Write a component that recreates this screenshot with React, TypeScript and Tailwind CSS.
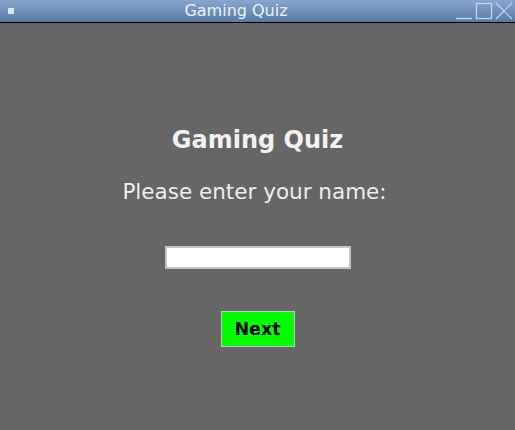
import React, { useState } from "react";

function TitleBar() {
  return (
    <div className="relative h-[23px] w-full bg-gradient-to-b from-[#8aa4cc] to-[#587aa8] border-b border-black flex items-center justify-center pr-[43px]">
      <span className="absolute left-[8px] top-[8px] w-[6px] h-[6px] bg-[#dde6f4]" />
      <span className="text-[16px] text-[#eef2f8] leading-none">Gaming Quiz</span>
      <div className="absolute right-[2px] top-[2px] flex items-end gap-[2px]">
        <svg width="18" height="18" viewBox="0 0 18 18">
          <path d="M1 16.5 H17" stroke="#c8d4e8" strokeWidth="1.5" />
        </svg>
        <svg width="18" height="18" viewBox="0 0 18 18">
          <rect x="1.5" y="1.5" width="15" height="15" fill="none" stroke="#c8d4e8" strokeWidth="1.3" />
        </svg>
        <svg width="18" height="18" viewBox="0 0 18 18">
          <path d="M1 1 L17 17 M17 1 L1 17" stroke="#c8d4e8" strokeWidth="1.2" />
        </svg>
      </div>
    </div>
  );
}

export default function App() {
  const [name, setName] = useState("");

  return (
    <div className="w-[515px] h-[430px] flex flex-col bg-[#666666] font-['DejaVu_Sans',sans-serif]">
      <TitleBar />
      <div className="flex flex-col items-center pt-[102px]">
        <h1 className="text-[24px] font-bold text-[#f2f2f2] leading-[30px]">Gaming Quiz</h1>
        <p className="mt-[24px] mr-[6px] text-[21.5px] text-[#eeeeee] leading-[26px]">Please enter your name:</p>
        <input
          value={name}
          onChange={(e) => setName(e.target.value)}
          className="mt-[41px] w-[186px] h-[23px] bg-white border-2 border-[#c4c4c4] outline-none px-1 text-[14px]"
        />
        <button className="mt-[42px] w-[74px] h-[36px] bg-[#00ff00] border border-[#c8c8c8] text-[17.5px] font-bold text-black">
          Next
        </button>
      </div>
    </div>
  );
}
